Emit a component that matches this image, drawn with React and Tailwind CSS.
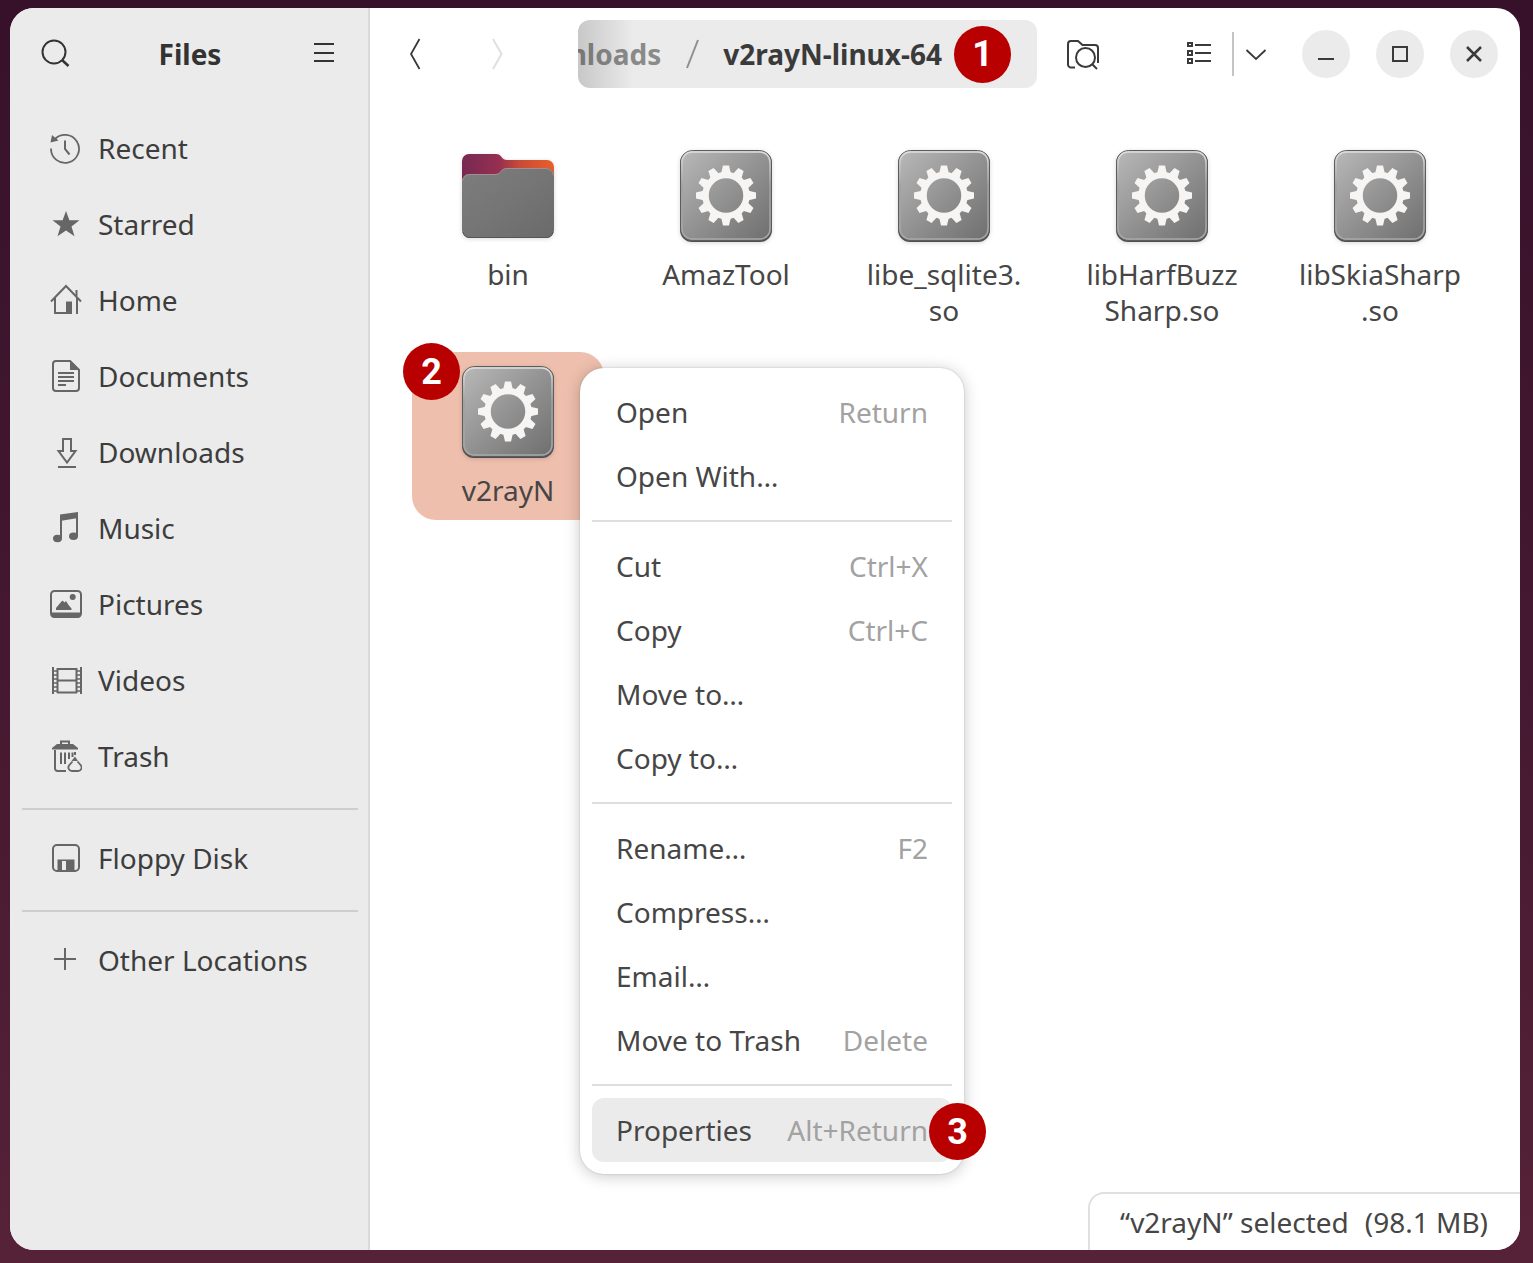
import clsx from 'clsx';

const PLACES = [
  { label: 'Recent', icon: RecentIcon },
  { label: 'Starred', icon: StarIcon },
  { label: 'Home', icon: HomeIcon },
  { label: 'Documents', icon: DocumentIcon },
  { label: 'Downloads', icon: DownloadIcon },
  { label: 'Music', icon: MusicIcon },
  { label: 'Pictures', icon: PictureIcon },
  { label: 'Videos', icon: VideoIcon },
  { label: 'Trash', icon: TrashIcon },
];

const FILES = [
  { lines: ['bin'], folder: true },
  { lines: ['AmazTool'] },
  { lines: ['libe_sqlite3.', 'so'] },
  { lines: ['libHarfBuzz', 'Sharp.so'] },
  { lines: ['libSkiaSharp', '.so'] },
  { lines: ['v2rayN'], selected: true },
];

const MENU = [
  [{ label: 'Open', keys: 'Return' }, { label: 'Open With…' }],
  [{ label: 'Cut', keys: 'Ctrl+X' }, { label: 'Copy', keys: 'Ctrl+C' }, { label: 'Move to…' }, { label: 'Copy to…' }],
  [{ label: 'Rename…', keys: 'F2' }, { label: 'Compress…' }, { label: 'Email…' }, { label: 'Move to Trash', keys: 'Delete' }],
  [{ label: 'Properties', keys: 'Alt+Return', active: true, step: 3 }],
];

/* ---------- icons ---------- */

function Icon({ children, size = 32 }) {
  return (
    <svg width={size} height={size} viewBox="0 0 32 32" fill="none" stroke="currentColor" strokeWidth="2" className="shrink-0" aria-hidden="true">
      {children}
    </svg>
  );
}

function RecentIcon() {
  return (
    <Icon>
      <path d="M1 16.5A14 14 0 1 0 4.5 7.6" strokeWidth="1.8" />
      <path d="M0.5 10.5L2 3l6.500 5.500z" fill="currentColor" stroke="none" />
      <path d="M15 8.500v8.500l4.500 5.500" />
    </Icon>
  );
}

function StarIcon() {
  return (
    <Icon>
      <path d="M16 3l3.400 9.200H29.500l-8 6.200 3 9.900L16 22.500l-8.500 5.800 3-9.900-8-6.200h10.100z" fill="currentColor" stroke="none" />
    </Icon>
  );
}

function HomeIcon() {
  return (
    <Icon>
      <path d="M1 17.500L16 2l15 15.500" />
      <path d="M26.500 6v6" />
      <path d="M5 14v15h13M27 14v16" />
      <path d="M16 17.500h6V30h-6z" fill="currentColor" stroke="none" />
    </Icon>
  );
}

function DocumentIcon() {
  return (
    <Icon>
      <path d="M20 1H6a3 3 0 0 0-3 3v24a3 3 0 0 0 3 3h20a3 3 0 0 0 3-3V10z" />
      <path d="M20 0l10 10H20z" fill="currentColor" stroke="none" />
      <path d="M8 13h16M8 17h16M8 21h16M8 25h8" />
    </Icon>
  );
}

function DownloadIcon() {
  return (
    <Icon>
      <path d="M13 3h8v12h4.500L17 26.500 8.500 15H13z" />
      <path d="M8 31h18" />
    </Icon>
  );
}

function MusicIcon() {
  return (
    <Icon>
      <path d="M11 27V3M27 24V2" />
      <path d="M10 2.500L28 0v6L10 9z" fill="currentColor" stroke="none" />
      <ellipse cx="7.500" cy="26.500" rx="4.500" ry="3.700" fill="currentColor" stroke="none" />
      <ellipse cx="23.500" cy="24.200" rx="4.500" ry="3.700" fill="currentColor" stroke="none" />
    </Icon>
  );
}

function PictureIcon() {
  return (
    <Icon>
      <rect x="1" y="3" width="30" height="26" rx="3.500" />
      <path d="M1 24.500h30V26a3.500 3.500 0 0 1-3.500 3.500h-23A3.500 3.500 0 0 1 1 26z" fill="currentColor" stroke="none" />
      <path d="M6 22v-2l5-6 1.500-1.500 2 2 1.500-1.500 2.500 4 3 3.500V22z" fill="currentColor" stroke="none" />
      <circle cx="22.700" cy="9" r="3" fill="currentColor" stroke="none" />
    </Icon>
  );
}

function VideoIcon() {
  return (
    <Icon>
      <path d="M3 3v27M31 3v27M7.500 4v25M26.500 4v25M7 5h20M7 28.500h20M7 16.500h20" />
      <path d="M3 7h4M3 11h4M3 15h4M3 19h4M3 23h4M3 27h4M27 7h4M27 11h4M27 15h4M27 19h4M27 23h4M27 27h4" strokeWidth="1.500" />
    </Icon>
  );
}

function TrashIcon() {
  return (
    <Icon>
      <path d="M11 5V1.500h8V5" />
      <path d="M2 9.500V8l5-4h16l5 4v1.500z" fill="currentColor" stroke="none" />
      <path d="M5 10v18.500A2.500 2.500 0 0 0 7.500 31H16M25 12v3" />
      <path d="M11 12.500V24M15 12.500V24M19 12.500V19M22.500 12.500V17" />
      <path d="M25 16.500l3 4.500h-6.500z" fill="currentColor" stroke="none" />
      <path d="M22.500 21.500l-3.500 4c-1.500 2.500 0 5.500 3 5.500h6c3 0 4.500-3 3-5.500l-3.500-4" strokeWidth="1.800" />
    </Icon>
  );
}

function FloppyIcon() {
  return (
    <Icon>
      <rect x="3" y="3" width="26" height="26" rx="4" />
      <path d="M7.500 30V17.500h17V30zM12 19v9h4v-9z" fillRule="evenodd" fill="currentColor" stroke="none" />
    </Icon>
  );
}

function PlusIcon() {
  return <Icon><path d="M4 15h22M15 4v22" /></Icon>;
}

function SearchIcon() {
  return (
    <Icon>
      <circle cx="14" cy="14" r="11.500" />
      <path d="M22 22l6.500 6" strokeWidth="2.500" />
    </Icon>
  );
}

function FolderSearchIcon() {
  return (
    <Icon>
      <path d="M8 29.500H4a3 3 0 0 1-3-3V6a3 3 0 0 1 3-3h7l4.500 4H28a3 3 0 0 1 3 3v15" />
      <circle cx="18.500" cy="19.500" r="9.500" />
      <path d="M25.500 26.500l4.500 4.500" />
    </Icon>
  );
}

function FolderArt() {
  return (
    <svg width="96" height="96" viewBox="0 0 96 96" aria-hidden="true" className="drop-shadow-sm">
      <defs>
        <linearGradient id="folder-back" x1="0" x2="1" y1="0" y2="0">
          <stop offset="0" stopColor="#772953" />
          <stop offset="0.4" stopColor="#962f50" />
          <stop offset="0.62" stopColor="#c84a38" />
          <stop offset="1" stopColor="#e95f2a" />
        </linearGradient>
        <linearGradient id="folder-front" x1="0" x2="1" y1="0" y2="1">
          <stop offset="0" stopColor="#7d7d7d" />
          <stop offset="0.5" stopColor="#757575" />
          <stop offset="1" stopColor="#6a6a6a" />
        </linearGradient>
      </defs>
      <path d="M2 13a7 7 0 0 1 7-7h27c3 0 4 1 5.500 3s3 3 5.500 3h40a7 7 0 0 1 7 7v30H2z" fill="url(#folder-back)" />
      <path d="M2 33a7 7 0 0 1 7-7h26c3 0 4.500-1 6-3s3.500-3 6-3h39a8 8 0 0 1 8 8v54a8 8 0 0 1-8 8H10a8 8 0 0 1-8-8z" fill="url(#folder-front)" />
      <path d="M2.500 33a7 7 0 0 1 7-6.500H35c3 0 4.500-1 6-3s3.500-3 6-3h39a8 8 0 0 1 7.500 7" fill="none" stroke="#a08f90" />
      <path d="M3 84a7 7 0 0 0 7 5.500h76a7 7 0 0 0 7-5.500" fill="none" stroke="#555" />
    </svg>
  );
}

const TEETH = [0, 30, 60, 90, 120, 150, 180, 210, 240, 270, 300, 330];

function GearArt() {
  return (
    <svg width="96" height="96" viewBox="0 0 96 96" aria-hidden="true" className="drop-shadow-sm">
      <defs>
        <linearGradient id="gear-plate" x1="0" x2="1" y1="0" y2="1">
          <stop offset="0" stopColor="#b9b9b9" />
          <stop offset="0.5" stopColor="#929292" />
          <stop offset="1" stopColor="#6e6e6e" />
        </linearGradient>
        <linearGradient id="gear-rim" x1="0" x2="0" y1="0" y2="1">
          <stop offset="0" stopColor="#dedede" />
          <stop offset="0.4" stopColor="#a0a0a0" />
          <stop offset="1" stopColor="#a8a8a8" />
        </linearGradient>
      </defs>
      <rect x="2" y="3" width="92" height="91" rx="12" fill="#4f4f4f" />
      <rect x="2.500" y="2.500" width="91" height="90" rx="12" fill="url(#gear-plate)" stroke="#5c5c5c" />
      <rect x="4" y="4" width="88" height="87" rx="10" fill="none" stroke="url(#gear-rim)" strokeWidth="1.500" />
      <circle cx="48" cy="47.500" r="20.500" fill="none" stroke="#f6f5f3" strokeWidth="6.500" />
      {TEETH.map(a => (
        <path key={a} d="M43 26l2-8.500h6L53 26z" fill="#f6f5f3" transform={`rotate(${a} 48 47.500)`} />
      ))}
    </svg>
  );
}

/* ---------- pieces ---------- */

function StepBadge({ n, className }) {
  return (
    <span
      className={clsx(
        "flex size-[57px] shrink-0 items-center justify-center rounded-full bg-[#b90000] font-['Roboto',sans-serif] text-[36px] font-bold leading-none text-white",
        className,
      )}
    >
      {n}
    </span>
  );
}

function PlaceLink({ label, icon: PlaceIcon }) {
  return (
    <a href="#" className="flex h-[76px] items-center gap-4 pl-10 text-[#3d3d3d]">
      <span className="text-[#666]"><PlaceIcon /></span>
      {label}
    </a>
  );
}

function Sidebar() {
  return (
    <aside className="w-[360px] shrink-0 border-r-2 border-[#dadada] bg-[#ebebeb]">
      <header className="flex h-[92px] items-center justify-between pr-7 pl-[30px] text-[#333]">
        <button type="button" aria-label="Search"><SearchIcon /></button>
        <h1 className="text-[28px] font-bold">Files</h1>
        <button type="button" aria-label="Main menu">
          <Icon><path d="M6 6h20M6 15h20M6 23h20" /></Icon>
        </button>
      </header>
      <nav className="pt-2.5">
        {PLACES.map(p => <PlaceLink key={p.label} {...p} />)}
        <hr className="mt-3.5 mr-2.5 mb-2.5 ml-3 border-t-2 border-[#cecece]" />
        <PlaceLink label="Floppy Disk" icon={FloppyIcon} />
        <hr className="mt-3.5 mr-2.5 mb-2.5 ml-3 border-t-2 border-[#cecece]" />
        <PlaceLink label="Other Locations" icon={PlusIcon} />
      </nav>
    </aside>
  );
}

function WindowButton({ label, children }) {
  return (
    <button type="button" aria-label={label} className="flex size-12 items-center justify-center rounded-full bg-[#ebebeb]">
      <Icon>{children}</Icon>
    </button>
  );
}

function Toolbar() {
  return (
    <header className="flex h-[92px] items-center pr-[22px] pl-[11px] text-[#3a3a3a]">
      <button type="button" aria-label="Back" className="flex h-[68px] w-[68px] items-center justify-center">
        <Icon><path d="M20.500 1L12 16l8.500 15" strokeWidth="1.800" /></Icon>
      </button>
      <button type="button" aria-label="Forward" disabled className="ml-3.5 flex h-[68px] w-[68px] items-center justify-center text-[#dfdfdf]">
        <Icon><path d="M12 1l8.500 15L12 31" /></Icon>
      </button>

      {/* Path bar, scrolled to its end */}
      <nav aria-label="Path" className="relative ml-[47px] flex h-[68px] min-w-0 flex-1 items-center justify-end overflow-hidden rounded-xl bg-[#ebebeb] pr-[26px] text-[28px] font-bold">
        <a href="#" className="text-[#8a8a8a]">Downloads</a>
        <svg width="14" height="32" viewBox="0 0 14 32" className="mx-6 shrink-0" aria-hidden="true">
          <path d="M13 2L2 30" stroke="#8f8f8f" strokeWidth="2" />
        </svg>
        <a href="#" className="shrink-0">v2rayN-linux-64</a>
        <StepBadge n={1} className="ml-3" />
        <span className="absolute inset-y-0 left-0 w-14 bg-linear-to-r from-black/15 to-transparent" />
      </nav>

      <button type="button" aria-label="Search folder" className="ml-3 flex h-[68px] w-[68px] items-center justify-center">
        <FolderSearchIcon />
      </button>
      <button type="button" aria-label="List view" className="ml-[49px] flex h-[68px] w-[66px] items-center justify-center">
        <Icon>
          <path d="M5 5h4v3H5zM5 13h4v4H5zM5 21h4v4H5z" />
          <path d="M12 7h16M12 15h16M12 23h16" />
        </Icon>
      </button>
      <span className="h-11 w-0.5 bg-[#c4c4c4]" />
      <button type="button" aria-label="View options" className="flex h-[68px] w-11 items-center justify-center">
        <Icon><path d="M6.500 12l9.500 9 9.500-9" strokeWidth="1.800" /></Icon>
      </button>
      <div className="ml-6 flex gap-[26px]">
        <WindowButton label="Minimize"><path d="M8 21h16" /></WindowButton>
        <WindowButton label="Maximize"><path d="M9 9h14v14H9z" /></WindowButton>
        <WindowButton label="Close"><path d="M9 9l14 14M23 9L9 23" strokeWidth="2.500" /></WindowButton>
      </div>
    </header>
  );
}

function ContextMenu() {
  return (
    <div role="menu" className="absolute top-4 left-[168px] z-10 w-96 rounded-3xl bg-white p-3 text-[#464646] shadow-[0_2px_16px_rgba(0,0,0,0.22),0_0_2px_rgba(0,0,0,0.2)]">
      {MENU.map((group, i) => (
        <div key={i} role="group">
          {i > 0 && <hr className="my-3 border-t-2 border-[#dedede]" />}
          {group.map(item => (
            <button
              key={item.label}
              type="button"
              role="menuitem"
              className={clsx('relative flex h-16 w-full items-center justify-between rounded-xl px-6', item.active && 'bg-[#ebebeb]')}
            >
              <span>{item.label}</span>
              {item.keys && <span className="text-[#a2a2a2]">{item.keys}</span>}
              {item.step && <StepBadge n={item.step} className="absolute top-[5px] -right-[34px]" />}
            </button>
          ))}
        </div>
      ))}
    </div>
  );
}

function FileTile({ file }) {
  return (
    <div className={clsx('relative rounded-3xl', file.selected && 'bg-[#eebfad]')}>
      <button type="button" className="flex w-full flex-col items-center gap-3 py-3 text-center">
        {file.folder ? <FolderArt /> : <GearArt />}
        <span>
          {file.lines.map(line => <span key={line} className="block">{line}</span>)}
        </span>
      </button>
      {file.selected && (
        <>
          <StepBadge n={2} className="absolute -top-[9px] -left-[9px]" />
          <ContextMenu />
        </>
      )}
    </div>
  );
}

export default function App() {
  return (
    <div className="flex min-h-screen bg-linear-to-b from-[#37112a] via-[#431830] to-[#562238] pt-2 pr-[13px] pb-[13px] pl-2.5 font-['Noto_Sans',sans-serif] text-[28px] leading-9 text-[#464646]">
      <div className="relative flex flex-1 overflow-hidden rounded-3xl bg-white">
        <Sidebar />
        <main className="min-w-0 flex-1">
          <Toolbar />
          <div className="grid grid-cols-5 items-start gap-x-[26px] gap-y-3 pt-9 pr-11 pl-[42px]">
            {FILES.map(f => <FileTile key={f.lines[0]} file={f} />)}
          </div>
        </main>
        <div role="status" className="absolute right-0 bottom-0 flex h-[58px] items-center gap-4 rounded-tl-2xl border-t-2 border-l-2 border-[#e0e0e0] bg-white pr-8 pl-[30px]">
          <span>“v2rayN” selected</span>
          <span>(98.1 MB)</span>
        </div>
      </div>
    </div>
  );
}
